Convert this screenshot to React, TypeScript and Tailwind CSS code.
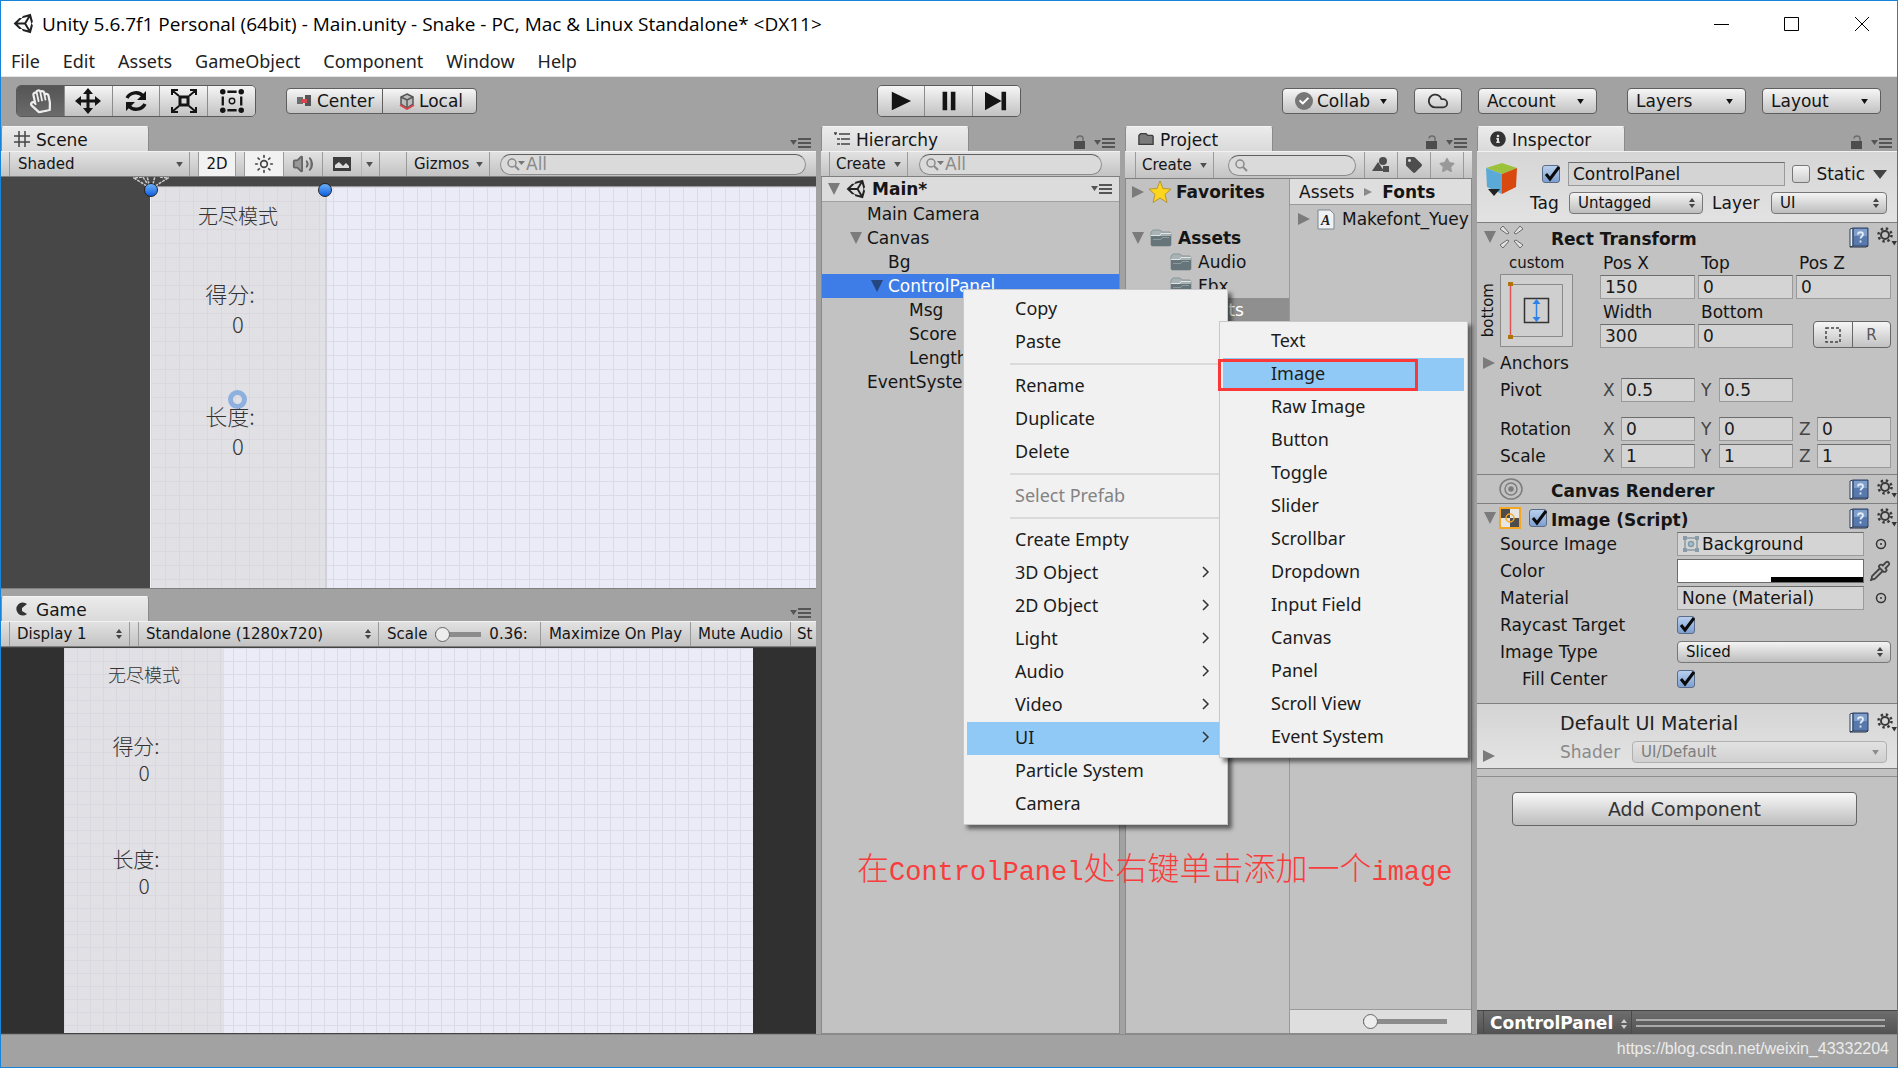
/**
 * Editor window: main toolbar, Scene / Game views on the left,
 * Hierarchy, Project and Inspector panels on the right.
 */
import type { ReactNode } from 'react'
import { clsx } from 'clsx'
import { Cloud, Pipette, Sun, Volume2 } from 'lucide-react'
import { FaCheck, FaInfoCircle, FaRegHandPaper, FaStar, FaTag, FaUnity } from 'react-icons/fa'

const MENUS = ['File', 'Edit', 'Assets', 'GameObject', 'Component', 'Window', 'Help']

interface MenuEntry {
  label: string
  submenu?: boolean
  disabled?: boolean
  active?: boolean
  divider?: boolean
}

const CONTEXT_MENU: MenuEntry[] = [
  { label: 'Copy' },
  { label: 'Paste', divider: true },
  { label: 'Rename' },
  { label: 'Duplicate' },
  { label: 'Delete', divider: true },
  { label: 'Select Prefab', disabled: true, divider: true },
  { label: 'Create Empty' },
  { label: '3D Object', submenu: true },
  { label: '2D Object', submenu: true },
  { label: 'Light', submenu: true },
  { label: 'Audio', submenu: true },
  { label: 'Video', submenu: true },
  { label: 'UI', submenu: true, active: true },
  { label: 'Particle System' },
  { label: 'Camera' },
]

const UI_MENU: MenuEntry[] = [
  { label: 'Text' },
  { label: 'Image', active: true },
  { label: 'Raw Image' },
  { label: 'Button' },
  { label: 'Toggle' },
  { label: 'Slider' },
  { label: 'Scrollbar' },
  { label: 'Dropdown' },
  { label: 'Input Field' },
  { label: 'Canvas' },
  { label: 'Panel' },
  { label: 'Scroll View' },
  { label: 'Event System' },
]

/* ---------- Small glyphs ---------- */

function Triangle({ open, small, className }: { open?: boolean; small?: boolean; className?: string }) {
  return (
    <svg viewBox="0 0 12 12" className={clsx('shrink-0', small ? 'h-2 w-2' : 'h-3 w-3', className ?? 'text-[#7b7b7b]')} fill="currentColor">
      {open ? <path d="M0 0h12L6 12z" /> : <path d="M0 0v12l12-6z" />}
    </svg>
  )
}

function Caret({ className }: { className?: string }) {
  return (
    <svg viewBox="0 0 8 6" className={clsx('h-[5px] w-[7px] shrink-0', className ?? 'text-[#505050]')} fill="currentColor">
      <path d="M0 0h8L4 6z" />
    </svg>
  )
}

function UpDown({ className }: { className?: string }) {
  return (
    <svg viewBox="0 0 6 10" className={clsx('h-2.5 w-1.5 shrink-0', className ?? 'text-[#444]')} fill="currentColor">
      <path d="M3 0l3 4H0zM3 10l3-4H0z" />
    </svg>
  )
}

function PaneMenuIcon() {
  return (
    <svg viewBox="0 0 22 10" className="h-2.5 w-[22px]" fill="#555">
      <path d="M0 2h7L3.500 7zM8 0h13v2H8zM8 4h13v2H8zM8 8h13v2H8z" />
    </svg>
  )
}

function LockIcon() {
  return (
    <svg viewBox="0 0 12 14" className="h-3.5 w-3" fill="none">
      <rect x="0" y="6" width="11" height="8" fill="#4d4d4d" />
      <path d="M3 3.500C3 0 9 0 9 3.500V6" stroke="#6d6d6d" strokeWidth="1.500" />
    </svg>
  )
}

function SearchIcon({ caret }: { caret?: boolean }) {
  return (
    <svg viewBox="0 0 18 14" className="h-3.5 w-[18px] shrink-0" fill="none">
      <circle cx="5" cy="6" r="4" stroke="#8a8a8a" strokeWidth="1.500" />
      <path d="M8 9l4 4" stroke="#8a8a8a" strokeWidth="2" />
      {caret && <path d="M11 4h7l-3.500 4z" fill="#777" />}
    </svg>
  )
}

function FolderIcon() {
  return (
    <svg viewBox="0 0 22 18" className="h-[18px] w-[22px] shrink-0">
      <path d="M1 3l2-2h7l2 2h8l1 2v11l-1 1H2l-1-1z" fill="#a9b2b4" stroke="#8d9698" />
      <path d="M1 7h20v9l-1 1H2l-1-1z" fill="#667579" />
      <path d="M1 6.500h9l1-2h10" stroke="#dfe5e6" fill="none" />
      <path d="M3 10.500h8l1-2h7" stroke="#8b999c" fill="none" />
    </svg>
  )
}

function BookIcon() {
  return (
    <svg viewBox="0 0 20 21" className="h-[21px] w-5 shrink-0">
      <path d="M1 2l3-1v18l-3 1z" fill="#e9eef4" stroke="#2f3f58" />
      <path d="M4 1h15v18H4z" fill="#5779ad" stroke="#2f4266" />
      <path d="M5 2h13v7H5z" fill="#7f9fca" />
      <path d="M1 20h16l2-1" stroke="#233149" fill="none" />
      <path d="M9 7.500c0-3 5-3 5 0 0 2-2.500 2-2.500 4M11.500 13.500v2" stroke="#e3ecf7" strokeWidth="1.800" fill="none" />
    </svg>
  )
}

function GearIcon() {
  return (
    <svg viewBox="0 0 20 20" className="h-5 w-5" fill="none" stroke="#3a3a3a">
      <circle cx="8" cy="8" r="4" strokeWidth="2" />
      <circle cx="8" cy="8" r="6.500" strokeWidth="2.500" strokeDasharray="2.400 2.705" />
      <path d="M14.500 14H20l-2.700 4.500z" fill="#333" stroke="none" />
    </svg>
  )
}

function HeaderButtons({ label }: { label: string }) {
  return (
    <span className="flex items-center gap-2">
      <button aria-label={`${label} help`}><BookIcon /></button>
      <button aria-label={`${label} settings`}><GearIcon /></button>
    </span>
  )
}

/* ---------- Controls ---------- */

function Checkbox({ id, label, checked }: { id: string; label?: string; checked?: boolean }) {
  return (
    <span className="relative inline-flex h-[18px] w-[18px] shrink-0">
      <input
        id={id}
        type="checkbox"
        aria-label={label}
        defaultChecked={checked}
        className="h-full w-full appearance-none rounded-[3px] border border-[#777] bg-linear-to-b from-[#f4f4f4] to-[#d0d0d0] checked:border-[#5c6c88] checked:from-[#b8d0ee] checked:to-[#7d9fd0]"
      />
      {checked && (
        <svg viewBox="0 0 18 18" className="pointer-events-none absolute inset-0" fill="none">
          <path d="M4 9l4 5 9-12" stroke="#0a0a0a" strokeWidth="3" />
        </svg>
      )}
    </span>
  )
}

function SelectBox({ label, value, className, disabled }: { label: string; value: string; className: string; disabled?: boolean }) {
  return (
    <span className={clsx('relative flex h-[22px] items-center', className)}>
      <select
        aria-label={label}
        disabled={disabled}
        className={clsx(
          'h-full w-full appearance-none rounded-[4px] border px-2 text-[15px] leading-5',
          disabled
            ? 'border-[#b0b0b0] bg-linear-to-b from-[#e2e2e2] to-[#d0d0d0] text-[#7d7d7d]'
            : 'border-[#777] bg-linear-to-b from-[#f4f4f4] to-[#bdbdbd] text-[#111]',
        )}
      >
        <option>{value}</option>
      </select>
      <span className="pointer-events-none absolute right-2">
        {disabled ? <Caret className="text-[#8c8c8c]" /> : <UpDown />}
      </span>
    </span>
  )
}

function Field({ label, value, axis }: { label: string; value: string; axis?: string }) {
  return (
    <label className="flex h-6 min-w-0 items-center">
      {axis && <span className="w-[21px] shrink-0 pl-[3px] text-[#444]">{axis}</span>}
      <input
        aria-label={label}
        defaultValue={value}
        className="h-full w-full min-w-0 border border-[#9a9a9a] border-t-[#6c6c6c] bg-[#d4d4d4] px-1 text-[#1a1a1a]"
      />
    </label>
  )
}

function BarButton({ label, children, className }: { label?: string; children: ReactNode; className: string }) {
  return (
    <button
      aria-label={label}
      className={clsx('flex h-[26px] items-center rounded-[4px] border border-[#5e5e5e] bg-linear-to-b from-[#f6f6f6] to-[#c2c2c2] leading-none', className)}
    >
      {children}
    </button>
  )
}

function Tab({ icon, title, lock }: { icon: ReactNode; title: string; lock?: boolean }) {
  return (
    <div className="flex h-[25px] shrink-0 items-end justify-between">
      <button className="flex h-full w-[148px] items-center gap-1.5 rounded-t-[3px] border border-b-0 border-[#8a8a8a] border-t-[#f4f4f4] bg-linear-to-b from-[#ebebeb] to-[#dadada] pt-0.5 pl-3 leading-none">
        <span className="flex w-4 justify-center pb-0.5">{icon}</span>
        {title}
      </button>
      <div className="flex items-end gap-2 pr-1 pb-0.5">
        {lock && <LockIcon />}
        <button aria-label={`${title} options`} className="flex pb-px"><PaneMenuIcon /></button>
      </div>
    </div>
  )
}

function PaneBar({ children, tall }: { children: ReactNode; tall?: boolean }) {
  return (
    <div className={clsx('flex shrink-0 items-stretch overflow-hidden border-y border-t-[#f2f2f2] border-b-[#7f7f7f] bg-linear-to-b from-[#e2e2e2] to-[#c3c3c3] text-[15px] leading-none whitespace-nowrap', tall ? 'h-7' : 'h-[26px]')}>
      {children}
    </div>
  )
}

function Search({ label, placeholder, caret, className }: { label: string; placeholder?: string; caret?: boolean; className: string }) {
  return (
    <label className={clsx('flex h-[21px] min-w-0 items-center gap-px self-center rounded-full border border-[#8c8c8c] border-t-[#5f5f5f] bg-[#dadada] px-1.5', className)}>
      <SearchIcon caret={caret} />
      <input aria-label={label} placeholder={placeholder} className="w-full min-w-0 text-[17px] leading-none placeholder:text-[#8a8a8a]" />
    </label>
  )
}

/* ---------- Title, menu and main toolbar ---------- */

function TitleBar() {
  return (
    <header className="bg-white">
      <div className="flex h-[45px] items-center pl-3 font-['Open_Sans','Noto_Sans',sans-serif] text-[19px] text-black">
        <FaUnity className="h-[23px] w-[23px] text-[#222]" />
        <h1 className="min-w-0 flex-1 truncate pl-1.5 leading-7">Unity 5.6.7f1 Personal (64bit) - Main.unity - Snake - PC, Mac &amp; Linux Standalone* &lt;DX11&gt;</h1>
        <div className="flex gap-[54px] pr-[27px]">
          <button aria-label="Minimize"><svg className="h-4 w-4" viewBox="0 0 16 16" stroke="#000"><path d="M0 8.500h15" /></svg></button>
          <button aria-label="Maximize"><svg className="h-4 w-4" viewBox="0 0 16 16" stroke="#000" fill="none"><path d="M.5 1.500h14v13H.5z" /></svg></button>
          <button aria-label="Close"><svg className="h-4 w-4" viewBox="0 0 16 16" stroke="#000"><path d="M1 1l14 14M15 1L1 15" /></svg></button>
        </div>
      </div>
      <nav className="flex h-[31px] items-center gap-[23px] border-b border-[#e4e4e4] pl-2.5 font-['Noto_Sans',sans-serif] text-[18px] text-[#222]">
        {MENUS.map(m => <button key={m}>{m}</button>)}
      </nav>
    </header>
  )
}

const TOOLS: { name: string; icon: ReactNode }[] = [
  { name: 'Hand', icon: <FaRegHandPaper className="h-6 w-6 -rotate-12 text-[#eee]" /> },
  {
    name: 'Move',
    icon: (
      <svg viewBox="0 0 26 26" className="h-[26px] w-[26px]" fill="#141414">
        <path d="M13 0l5 6h-3.500v5.500H20V8l6 5-6 5v-3.500h-5.500V20H18l-5 6-5-6h3.500v-5.500H6V18l-6-5 6-5v3.500h5.500V6H8z" />
      </svg>
    ),
  },
  {
    name: 'Rotate',
    icon: (
      <svg viewBox="0 0 24 24" className="h-6 w-6" fill="none" stroke="#141414" strokeWidth="3.500">
        <path d="M3 9c3-6 12-7 16-2M21 15c-3 6-12 7-16 2" />
        <path d="M22 2v9h-9zM2 22v-9h9z" fill="#141414" stroke="none" />
      </svg>
    ),
  },
  {
    name: 'Scale',
    icon: (
      <svg viewBox="0 0 26 24" className="h-6 w-[26px]" fill="none" stroke="#141414" strokeWidth="2">
        <rect x="9" y="8" width="8" height="8" strokeWidth="3" />
        <path d="M1 6V1h6M19 1h6v5M25 18v5h-6M7 23H1v-5M2 2l6 5M24 2l-6 5M24 22l-6-5M2 22l6-5" />
      </svg>
    ),
  },
  {
    name: 'Rect',
    icon: (
      <svg viewBox="0 0 26 26" className="h-6 w-6" fill="none" stroke="#141414" strokeWidth="2.500">
        <path d="M8 3h10M8 23h10M3 8v10M23 8v10" />
        <circle cx="13" cy="13" r="3" strokeWidth="1.500" />
        <g fill="#141414" stroke="none">
          <circle cx="3" cy="3" r="3" /><circle cx="23" cy="3" r="3" /><circle cx="3" cy="23" r="3" /><circle cx="23" cy="23" r="3" />
        </g>
      </svg>
    ),
  },
]

const PLAYBACK = [
  { name: 'Play', d: 'M2 2l21 10L2 22z' },
  { name: 'Pause', d: 'M5 2h5v20H5zM14 2h5v20h-5z' },
  { name: 'Step', d: 'M0 2l18 10L0 22zM18 2h5v20h-5z' },
]

function MainToolbar() {
  return (
    <div className="flex h-[49px] shrink-0 items-center pr-4 pb-px pl-2.5 text-[17px]">
      <div className="flex flex-1 items-center gap-[30px] pl-[5px]">
        <div className="flex h-8 w-60 overflow-hidden rounded-[5px] border border-[#5a5a5a]">
          {TOOLS.map((t, i) => (
            <button
              key={t.name}
              aria-label={t.name}
              className={clsx(
                'flex flex-1 items-center justify-center',
                i === 0 ? 'bg-linear-to-b from-[#555] to-[#6b6b6b]' : 'border-l border-[#8b8b8b] bg-linear-to-b from-[#f6f6f6] to-[#c2c2c2]',
              )}
            >
              {t.icon}
            </button>
          ))}
        </div>
        <div className="flex">
          <BarButton className="w-[97px] gap-1.5 rounded-r-none pl-2.5">
            <svg viewBox="0 0 14 12" className="h-3 w-3.5">
              <path d="M0 2h6v7H0z" fill="#6d6d6d" /><path d="M8 0h6v11H8z" fill="#555" /><path d="M5 4h5v4H5z" fill="#d8474d" />
            </svg>
            Center
          </BarButton>
          <BarButton className="-ml-px w-[95px] gap-1 rounded-l-none pl-4">
            <svg viewBox="0 0 16 17" className="h-[17px] w-4" fill="none" stroke="#555" strokeWidth="1.500">
              <path d="M8 1l6 3v7l-6 4-6-4V4z" fill="#bdbdbd" /><path d="M2 4l6 3 6-3M8 7v8" />
              <path d="M1 12l7 4 7-4" stroke="#d8474d" strokeWidth="2" />
            </svg>
            Local
          </BarButton>
        </div>
      </div>
      <div className="flex h-8 w-36 overflow-hidden rounded-[5px] border border-[#5a5a5a]">
        {PLAYBACK.map((p, i) => (
          <button key={p.name} aria-label={p.name} className={clsx('flex flex-1 items-center justify-center bg-linear-to-b from-[#f6f6f6] to-[#c2c2c2]', i > 0 && 'border-l border-[#8b8b8b]')}>
            <svg viewBox="0 0 24 24" className="h-[22px] w-[22px]" fill="#141414"><path d={p.d} /></svg>
          </button>
        ))}
      </div>
      <div className="flex flex-1 items-center justify-end gap-4">
        <BarButton className="w-[116px] gap-1 pl-3">
          <span className="flex h-[18px] w-[18px] items-center justify-center rounded-full bg-[#777]"><FaCheck className="h-2.5 w-2.5 text-white" /></span>
          Collab
          <Caret className="ml-1.5 text-[#111]" />
        </BarButton>
        <BarButton label="Cloud services" className="w-12 justify-center">
          <Cloud className="h-[22px] w-[22px] text-[#333]" strokeWidth={2} />
        </BarButton>
        <BarButton className="w-[119px] justify-between pr-3 pl-2">Account<Caret className="text-[#111]" /></BarButton>
        <BarButton className="ml-3.5 w-[119px] justify-between pr-3 pl-2">Layers<Caret className="text-[#111]" /></BarButton>
        <BarButton className="w-[119px] justify-between pr-3 pl-2">Layout<Caret className="text-[#111]" /></BarButton>
      </div>
    </div>
  )
}

/* ---------- Scene and Game views ---------- */

function ScorePair({ label, className }: { label: string; className: string }) {
  return (
    <div className={clsx('flex flex-col items-center', className)}>
      <span className="pr-4">{label}</span>
      <span>0</span>
    </div>
  )
}

function Handle({ className }: { className: string }) {
  return <span className={clsx('absolute h-3.5 w-3.5 rounded-full border border-[#222] bg-linear-to-b from-[#6cb0f8] to-[#0a5ce0]', className)} />
}

function SceneView() {
  return (
    <section className="flex flex-col">
      <Tab title="Scene" icon={<svg viewBox="0 0 16 16" className="h-4 w-4" stroke="#444" strokeWidth="1.500"><path d="M5 0v16M11 0v16M0 5h16M0 11h16" /></svg>} />
      <PaneBar>
        <button className="ml-2 flex w-[181px] items-center justify-between border-x border-[#9a9a9a] pr-1.5 pl-2">Shaded<Caret /></button>
        <button className="ml-2 w-[38px] border-x border-[#9a9a9a] bg-[#f2f2f2]">2D</button>
        <button aria-label="Scene lighting" className="ml-2 flex w-10 items-center justify-center border-x border-[#9a9a9a] bg-[#f2f2f2]"><Sun className="h-5 w-5 text-[#444]" /></button>
        <button aria-label="Scene audio" className="flex w-[39px] items-center justify-center border-r border-[#9a9a9a]"><Volume2 className="h-[22px] w-[22px] fill-[#999] text-[#666]" /></button>
        <button aria-label="Effects" className="flex w-[39px] items-center justify-center border-r border-[#b5b5b5]">
          <svg viewBox="0 0 18 14" className="h-3.5 w-[18px]"><path d="M0 0h18v14H0z" fill="#3d3d3d" /><path d="M2 11V8l4-3 4 4 3-3 3 3v2z" fill="#ddd" /></svg>
        </button>
        <button aria-label="Effects menu" className="flex w-[18px] items-center border-r border-[#9a9a9a] pl-1"><Caret /></button>
        <button className="ml-[26px] flex w-[84px] items-center justify-between border-x border-[#9a9a9a] pr-1.5 pl-[7px]">Gizmos<Caret /></button>
        <Search label="Search scene" placeholder="All" caret className="mr-2.5 ml-2.5 flex-1" />
      </PaneBar>
      <div className="flex h-[412px] overflow-hidden border-b border-[#7f7f7f] bg-[#474747] pt-[9px] pl-[149px]">
        <div className="relative flex-1 border-t border-l border-[#f4f4f4] border-t-[#9a9a9a] bg-[#ebebf7] bg-[linear-gradient(to_right,#dddae6_1px,transparent_1px),linear-gradient(to_bottom,#dddae6_1px,transparent_1px)] bg-[size:14px_14px]">
          <svg viewBox="0 0 36 12" className="absolute -top-[11px] -left-[18px] h-3 w-9" stroke="#ccc" strokeWidth="1.500" strokeDasharray="3 1">
            <path d="M17 12L1 2l9-1zM17 12L14 0M19 12L22 0M19 12L35 2l-9-1" fill="none" />
          </svg>
          <div className="h-full w-[176px] border-r-2 border-[#d0d0da] bg-[#d7d7d7]/55 pt-3.5 text-center font-['Noto_Sans_CJK_SC',sans-serif] text-[22px] leading-[30px] font-light text-[#333]">
            <p className="text-[20px]">无尽模式</p>
            <ScorePair label="得分:" className="mt-[47px]" />
            <ScorePair label="长度:" className="mt-[62px]" />
          </div>
          <Handle className="-top-1 -left-[7px]" />
          <Handle className="-top-1 left-[167px]" />
          <span className="absolute top-[203px] left-[77px] h-[19px] w-[19px] rounded-full border-5 border-[#8db0de]" />
        </div>
      </div>
    </section>
  )
}

function GameView() {
  return (
    <section className="mt-[7px] flex flex-1 flex-col">
      <Tab title="Game" icon={<svg viewBox="0 0 14 14" className="h-3.5 w-3.5"><path d="M12 2A6.500 6.500 0 1 0 12 12L7 9V6z" fill="#333" /></svg>} />
      <PaneBar>
        <button className="ml-2 flex w-[121px] shrink-0 items-center justify-between border-x border-[#9a9a9a] px-[7px]">Display 1<UpDown /></button>
        <button className="ml-2 flex w-[241px] shrink-0 items-center justify-between border-x border-[#9a9a9a] px-[7px]">Standalone (1280x720)<UpDown /></button>
        <label className="flex w-[162px] shrink-0 items-center border-r border-[#9a9a9a] pl-2">
          Scale
          <input
            type="range"
            defaultValue={0}
            className="mx-2 h-4 w-[46px] appearance-none bg-[linear-gradient(#8c8c8c,#8c8c8c)] bg-[size:100%_5px] bg-center bg-no-repeat [&::-webkit-slider-thumb]:h-[15px] [&::-webkit-slider-thumb]:w-[15px] [&::-webkit-slider-thumb]:appearance-none [&::-webkit-slider-thumb]:rounded-full [&::-webkit-slider-thumb]:border [&::-webkit-slider-thumb]:border-[#666] [&::-webkit-slider-thumb]:bg-[#ededed]"
          />
          <span>0.36:</span>
        </label>
        <button className="w-[150px] shrink-0 border-r border-[#9a9a9a]">Maximize On Play</button>
        <button className="w-[100px] shrink-0 border-r border-[#9a9a9a]">Mute Audio</button>
        <button className="w-6 shrink-0 overflow-hidden pl-1.5 text-left">St</button>
      </PaneBar>
      <div className="flex flex-1 border-t border-b border-[#444] bg-[#303030] px-[63px]">
        <div className="flex-1 bg-[#ebebf7] bg-[linear-gradient(to_right,#dddae6_1px,transparent_1px),linear-gradient(to_bottom,#dddae6_1px,transparent_1px)] bg-[size:13px_13px]">
          <div className="h-full w-40 bg-[#d7d7d7]/55 pt-[13px] text-center font-['Noto_Sans_CJK_SC',sans-serif] text-[21px] leading-[27px] font-light text-[#333]">
            <p className="text-[18px]">无尽模式</p>
            <ScorePair label="得分:" className="mt-11" />
            <ScorePair label="长度:" className="mt-[59px]" />
          </div>
        </div>
      </div>
    </section>
  )
}

/* ---------- Hierarchy ---------- */

function PopupMenu({ items, className, children }: { items: MenuEntry[]; className: string; children?: ReactNode }) {
  return (
    <div className={clsx("absolute border border-[#c9c9c9] bg-[#f1f1f1] p-[3px] font-['Noto_Sans',sans-serif] text-[18px] text-[#1c1c1c] shadow-[4px_4px_4px_rgba(0,0,0,0.5)]", className)}>
      {items.map(item => (
        <div key={item.label} className={clsx(item.divider && 'bg-[linear-gradient(#dadada,#dadada)] bg-[size:calc(100%-43px)_2px] bg-[position:right_bottom_5px] bg-no-repeat pb-[11px]')}>
          <button
            disabled={item.disabled}
            className={clsx('flex h-[33px] w-full items-center justify-between pr-3.5 pb-[3px] pl-12', item.active && 'bg-[#90c8f6]', item.disabled && 'text-[#838383]')}
          >
            {item.label}
            {item.submenu && <svg viewBox="0 0 8 12" className="h-3 w-2" fill="none" stroke="#333" strokeWidth="1.500"><path d="M1 1l5 5-5 5" /></svg>}
          </button>
        </div>
      ))}
      {children}
    </div>
  )
}

const HIERARCHY = [
  { name: 'Main Camera', pad: 'pl-[28px]' },
  { name: 'Canvas', pad: 'pl-[28px]', open: true },
  { name: 'Bg', pad: 'pl-[49px]' },
  { name: 'ControlPanel', pad: 'pl-[49px]', open: true, selected: true },
  { name: 'Msg', pad: 'pl-[70px]' },
  { name: 'Score', pad: 'pl-[70px]' },
  { name: 'Length', pad: 'pl-[70px]' },
  { name: 'EventSystem', pad: 'pl-[28px]' },
]

function Hierarchy() {
  return (
    <section className="relative z-20 flex w-[299px] shrink-0 flex-col">
      <Tab title="Hierarchy" lock icon={<svg viewBox="0 0 16 14" className="h-3.5 w-4" stroke="#444" strokeWidth="1.500"><path d="M0 1h3M5 2h11M3 7h3M7 7h9M3 12h3M7 12h9M1.500 1v2" /></svg>} />
      <PaneBar>
        <button className="ml-2 flex w-[79px] items-center justify-between border-x border-[#9a9a9a] px-1.5">Create<Caret /></button>
        <Search label="Search hierarchy" placeholder="All" caret className="mr-[18px] ml-[11px] flex-1" />
      </PaneBar>
      <div className="flex-1 border-x border-b border-[#8a8a8a] bg-[#c2c2c2]">
        <div className="flex h-[25px] items-center border-b border-[#a0a0a0] bg-[#dcdcdc] pr-1.5 pl-1.5 font-bold">
          <Triangle open />
          <FaUnity className="mr-1 ml-1.5 h-[22px] w-[22px] text-[#222]" />
          <span className="flex-1">Main*</span>
          <button aria-label="Scene options"><PaneMenuIcon /></button>
        </div>
        <ul>
          {HIERARCHY.map(node => (
            <li key={node.name} className={clsx('flex h-6 items-center leading-6', node.pad, node.selected && 'bg-[#3e7de7] text-white')}>
              <span className="w-[17px]">{node.open && <Triangle open className={node.selected ? 'text-[#24477f]' : 'text-[#7b7b7b]'} />}</span>
              {node.name}
            </li>
          ))}
        </ul>
      </div>
      <PopupMenu items={CONTEXT_MENU} className="top-[163px] left-[142px] w-[265px]">
        <PopupMenu items={UI_MENU} className="top-[31px] left-[255px] w-[249px]" />
        <span className="pointer-events-none absolute top-[69px] left-[254px] h-8 w-[200px] border-3 border-[#fa3838]" />
      </PopupMenu>
      <p className="absolute top-[722px] left-[36px] font-['Liberation_Mono','Noto_Sans_CJK_SC',monospace] text-[27px] leading-[48px] font-light whitespace-nowrap text-[#f93c3c]">
        <span className="text-[32px]">在</span>ControlPanel<span className="text-[32px]">处右键单击添加一个</span>image
      </p>
    </section>
  )
}

/* ---------- Project ---------- */

function ProjectPanel() {
  return (
    <section className="flex w-[347px] shrink-0 flex-col">
      <Tab title="Project" lock icon={<svg viewBox="0 0 18 14" className="h-3.5 w-[18px]"><path d="M1 3l2-2h6l2 2h5l1 1v9H1z" fill="#7a7a7a" stroke="#3d3d3d" strokeWidth="1.500" /></svg>} />
      <PaneBar tall>
        <button className="ml-2.5 flex w-[79px] shrink-0 items-center justify-between border-x border-[#9a9a9a] px-1.5">Create<Caret /></button>
        <Search label="Search assets" className="mr-2 ml-3.5 flex-1" />
        <button aria-label="Search by type" className="flex w-[33px] items-center justify-center border-l border-[#9a9a9a]">
          <svg viewBox="0 0 18 16" className="h-4 w-[18px]" fill="#4d4d4d"><path d="M6 5l6 9H0z" /><circle cx="11" cy="4" r="4" /><path d="M11 9h6v6h-6z" /></svg>
        </button>
        <button aria-label="Search by label" className="flex w-[33px] items-center justify-center border-l border-[#9a9a9a]"><FaTag className="h-4 w-4 text-[#4d4d4d]" /></button>
        <button aria-label="Save search" className="mr-2 flex w-[34px] items-center justify-center border-x border-[#9a9a9a]"><FaStar className="h-4 w-4 text-[#999]" /></button>
      </PaneBar>
      <div className="flex min-h-0 flex-1 border-x border-b border-[#8a8a8a] bg-[#c2c2c2]">
        <ul className="w-[164px] border-r border-[#9a9a9a] leading-6">
          <li className="mb-[22px] flex h-[25px] items-center pl-1.5 font-bold">
            <Triangle />
            <svg viewBox="0 0 24 24" className="mx-1 h-6 w-6"><path d="M12 1l3 7.500 8 .5-6 5.500 2 8-7-4.500-7 4.500 2-8L1 9l8-.5z" fill="#fbd51e" stroke="#b79538" /></svg>
            Favorites
          </li>
          <li className="flex h-6 items-center gap-1.5 pl-1.5 font-bold"><Triangle open /><FolderIcon />Assets</li>
          <li className="flex h-6 items-center gap-1.5 pl-11"><FolderIcon />Audio</li>
          <li className="flex h-6 items-center gap-1.5 pl-11"><FolderIcon />Fbx</li>
          <li className="flex h-6 items-center gap-1.5 bg-[#8f8f8f] pl-11 text-white"><FolderIcon />Fonts</li>
        </ul>
        <div className="flex min-w-0 flex-1 flex-col">
          <div className="flex h-[26px] items-center gap-2.5 border-b border-[#9a9a9a] bg-[#dedede] pl-[9px]">
            <button>Assets</button>
            <Triangle small className="text-[#8a8a8a]" />
            <button className="font-bold">Fonts</button>
          </div>
          <div className="flex h-[28px] items-center overflow-hidden pl-2 whitespace-nowrap">
            <Triangle />
            <svg viewBox="0 0 18 21" className="mr-[7px] ml-[7px] h-[21px] w-[18px] shrink-0">
              <path d="M1 1h12l4 4v15H1z" fill="#eef2f5" stroke="#7c878e" />
              <text x="4" y="16" fontSize="14" fontStyle="italic" fontWeight="bold" fontFamily="Liberation Serif" fill="#222">A</text>
            </svg>
            Makefont_Yuey
          </div>
          <div className="mt-auto flex h-6 items-center justify-end border-t border-[#9a9a9a] bg-[#dedede] pr-6">
            <input
              type="range"
              aria-label="Icon size"
              defaultValue={0}
              className="h-4 w-[84px] appearance-none bg-[linear-gradient(#8c8c8c,#8c8c8c)] bg-[size:100%_5px] bg-center bg-no-repeat [&::-webkit-slider-thumb]:h-[15px] [&::-webkit-slider-thumb]:w-[15px] [&::-webkit-slider-thumb]:appearance-none [&::-webkit-slider-thumb]:rounded-full [&::-webkit-slider-thumb]:border [&::-webkit-slider-thumb]:border-[#666] [&::-webkit-slider-thumb]:bg-[#ededed]"
            />
          </div>
        </div>
      </div>
    </section>
  )
}

/* ---------- Inspector ---------- */

function ComponentHeader({ title, icon, check, open }: { title: string; icon: ReactNode; check?: boolean; open?: boolean }) {
  return (
    <div className="flex h-7 items-center pl-[7px]">
      <span className="w-[15px]">{open && <Triangle open />}</span>
      <span className="flex w-[30px]">{icon}</span>
      <span className="flex w-[22px]">{check && <Checkbox id="image-enabled" label={title} checked />}</span>
      <h2 className="flex-1 pt-[3px] font-bold">{title}</h2>
      <HeaderButtons label={title} />
    </div>
  )
}

function Property({ label, id, indent, children }: { label: string; id?: string; indent?: boolean; children: ReactNode }) {
  return (
    <div className="flex h-6 items-center">
      <label htmlFor={id} className={clsx('w-[200px] shrink-0', indent ? 'pl-[45px]' : 'pl-[23px]')}>{label}</label>
      {children}
    </div>
  )
}

function Picker({ label }: { label: string }) {
  return (
    <button aria-label={label} className="flex w-[27px] justify-center pl-1.5">
      <svg viewBox="0 0 12 12" className="h-3 w-3" fill="none" stroke="#333"><circle cx="6" cy="6" r="4.500" strokeWidth="1.500" /><circle cx="6" cy="6" r="1" fill="#333" stroke="none" /></svg>
    </button>
  )
}

function AxisRow({ label, values, className }: { label: string; values: string[]; className?: string }) {
  return (
    <div className={clsx('flex h-6 items-center', className)}>
      <span className="w-[123px] shrink-0 pl-[23px]">{label}</span>
      <div className="grid flex-1 grid-cols-3 gap-[3px]">
        {values.map((v, i) => <Field key={i} axis={'XYZ'[i]} label={`${label} ${'XYZ'[i]}`} value={v} />)}
      </div>
    </div>
  )
}

function RectTransform() {
  return (
    <div className="border-t border-[#7f7f7f] pb-1.5">
      <ComponentHeader
        title="Rect Transform"
        open
        icon={
          <svg viewBox="0 0 25 24" className="h-6 w-[25px]" fill="#e2e2e2" stroke="#6a6a6a">
            <path d="M1 4l3-3 6 7-2 1zM24 4l-3-3-6 7 2 1zM1 20l3 3 6-7-2-1zM24 20l-3 3-6-7 2-1z" />
          </svg>
        }
      />
      <div className="flex pr-1.5">
        <div className="flex w-[123px] shrink-0 flex-col pb-px">
          <span className="flex h-[23px] items-center pl-8 text-[15px]">custom</span>
          <div className="flex items-center">
            <span className="flex w-[23px] rotate-180 items-center justify-center text-[15px] leading-none [writing-mode:vertical-rl]">bottom</span>
            <button aria-label="Anchor presets">
              <svg viewBox="0 0 73 73" className="h-[73px] w-[73px]" fill="none">
                <path d="M.5.5h72v72H.5z" fill="#cfcfcf" stroke="#8a8a8a" />
                <path d="M10.500 10.500h52v52h-52z" stroke="#8a8a8a" />
                <path d="M10.500 11v52" stroke="#e15252" strokeWidth="1.500" />
                <path d="M8 8h5v4H8zM8 61h5v4H8z" fill="#b0730b" />
                <path d="M24.500 24.500h24v24h-24z" stroke="#333" strokeWidth="1.500" />
                <path d="M36.500 26v21" stroke="#2f81ea" strokeWidth="1.500" />
                <path d="M36.500 25l4 5h-8zM36.500 48l4-5h-8z" fill="#2f81ea" />
              </svg>
            </button>
          </div>
        </div>
        <div className="grid flex-1 grid-cols-3 gap-x-[3px]">
          <span className="flex h-6 items-center pl-[3px]">Pos X</span>
          <span className="flex h-6 items-center pl-[3px]">Top</span>
          <span className="flex h-6 items-center pl-[3px]">Pos Z</span>
          <Field label="Pos X" value="150" />
          <Field label="Top" value="0" />
          <Field label="Pos Z" value="0" />
          <span className="flex h-6 items-center pl-[3px]">Width</span>
          <span className="flex h-6 items-center pl-[3px]">Bottom</span>
          <div className="row-span-2 flex items-end justify-end">
            <button aria-label="Blueprint mode" className="flex h-[27px] w-10 items-center justify-center rounded-l-[4px] border border-[#666] bg-linear-to-b from-[#f6f6f6] to-[#c2c2c2]">
              <svg viewBox="0 0 16 16" className="h-4 w-4" fill="none" stroke="#444" strokeWidth="1.500" strokeDasharray="3 2"><path d="M1 1h14v14H1z" /></svg>
            </button>
            <button className="-ml-px h-[27px] w-[39px] rounded-r-[4px] border border-[#666] bg-linear-to-b from-[#f6f6f6] to-[#c2c2c2] text-[15px] text-[#555]">R</button>
          </div>
          <Field label="Width" value="300" />
          <Field label="Bottom" value="0" />
        </div>
      </div>
      <div className="flex h-[30px] items-center pl-1.5"><Triangle /><span className="pl-[5px]">Anchors</span></div>
      <div className="pr-1.5">
        <AxisRow label="Pivot" values={['0.5', '0.5']} />
        <AxisRow label="Rotation" values={['0', '0', '0']} className="mt-[15px]" />
        <AxisRow label="Scale" values={['1', '1', '1']} className="mt-[3px]" />
      </div>
    </div>
  )
}

function Inspector() {
  return (
    <section className="flex w-[420px] shrink-0 flex-col">
      <Tab title="Inspector" lock icon={<FaInfoCircle className="h-4 w-4 text-[#333]" />} />
      <div className="flex flex-1 flex-col bg-[#c2c2c2]">
        <div className="flex h-[71px] shrink-0 border-t border-[#f2f2f2] bg-linear-to-b from-[#d6d6d6] to-[#e2e2e2] pt-2.5 pr-2.5">
          <div className="w-[53px] shrink-0 pl-2">
            <svg viewBox="0 0 33 34" className="h-[34px] w-[33px]">
              <path d="M1 6L17 1l15 5-15 6z" fill="#9cc23c" />
              <path d="M1 6l16 6v20L2 25z" fill="#5aa9d6" />
              <path d="M32 6l-15 6v20l14-7z" fill="#d9480f" />
              <path d="M3 27h12l-6 7z" fill="#222" />
            </svg>
          </div>
          <div className="min-w-0 flex-1">
            <div className="flex h-6 items-center">
              <span className="flex w-[38px] shrink-0 justify-center pl-1"><Checkbox id="active" label="Active" checked /></span>
              <input aria-label="Name" defaultValue="ControlPanel" className="h-6 w-0 min-w-0 flex-1 border border-[#9a9a9a] border-t-[#6c6c6c] bg-[#d4d4d4] px-1" />
              <span className="ml-[7px] flex items-center gap-1.5"><Checkbox id="static" /><label htmlFor="static">Static</label></span>
              <svg viewBox="0 0 14 9" className="ml-2 h-[9px] w-3.5 shrink-0" fill="#444"><path d="M0 0h14L7 9z" /></svg>
            </div>
            <div className="mt-1.5 flex h-[22px] items-center">
              <span className="w-[39px] shrink-0">Tag</span>
              <SelectBox label="Tag" value="Untagged" className="w-[134px] shrink-0" />
              <span className="w-[68px] shrink-0 pl-[9px]">Layer</span>
              <SelectBox label="Layer" value="UI" className="min-w-0 flex-1" />
            </div>
          </div>
        </div>

        <RectTransform />

        <div className="border-t border-[#7f7f7f]">
          <ComponentHeader
            title="Canvas Renderer"
            icon={
              <svg viewBox="0 0 24 22" className="h-[22px] w-6" fill="none" stroke="#7d7d7d" strokeWidth="1.500">
                <ellipse cx="12" cy="11" rx="11" ry="10" /><circle cx="12" cy="11" r="6" /><circle cx="12" cy="11" r="2" fill="#7d7d7d" />
              </svg>
            }
          />
        </div>

        <div className="border-t border-[#7f7f7f] pb-3">
          <ComponentHeader
            title="Image (Script)"
            check
            open
            icon={
              <svg viewBox="0 0 22 22" className="h-[22px] w-[22px]">
                <path d="M1 1h20v20H1z" fill="#e6e6e6" /><path d="M1 1h10v10H1zM11 11h10v10H11z" fill="#4d4d4d" />
                <path d="M1 1h20v20H1z" fill="none" stroke="#f5a623" strokeWidth="2" /><circle cx="11" cy="11" r="4" fill="none" stroke="#f5a623" strokeWidth="1.500" />
              </svg>
            }
          />
          <div className="flex flex-col gap-[3px] pr-1.5">
            <Property label="Source Image">
              <button className="flex h-6 flex-1 items-center gap-0.5 border border-[#9a9a9a] border-t-[#6c6c6c] bg-[#d4d4d4] pl-1 leading-none">
                <svg viewBox="0 0 18 18" className="h-[18px] w-[18px]" fill="none" stroke="#8a9ba5" strokeWidth="1.500">
                  <path d="M3 3h12v12H3z" /><circle cx="9" cy="9" r="2.500" fill="#9ec3d6" />
                  <path d="M1 1h4v4H1zM13 1h4v4h-4zM1 13h4v4H1zM13 13h4v4h-4z" fill="#8a9ba5" stroke="none" />
                </svg>
                Background
              </button>
              <Picker label="Pick source image" />
            </Property>
            <Property label="Color">
              <button aria-label="Color" className="flex h-6 flex-1 items-end justify-end border border-[#6c6c6c] bg-white">
                <span className="h-[5px] w-1/2 bg-black" />
              </button>
              <button aria-label="Pick color" className="flex w-[27px] justify-center pl-1"><Pipette className="h-[22px] w-[22px] fill-[#bbb] text-[#444]" strokeWidth={2} /></button>
            </Property>
            <Property label="Material">
              <button className="flex h-6 flex-1 items-center border border-[#9a9a9a] border-t-[#6c6c6c] bg-[#d4d4d4] pl-1 leading-none">None (Material)</button>
              <Picker label="Pick material" />
            </Property>
            <Property label="Raycast Target" id="raycast"><Checkbox id="raycast" checked /></Property>
            <Property label="Image Type"><SelectBox label="Image Type" value="Sliced" className="flex-1" /></Property>
            <Property label="Fill Center" id="fill-center" indent><Checkbox id="fill-center" checked /></Property>
          </div>
        </div>

        <div className="relative flex h-[66px] shrink-0 flex-col border-y border-[#7f7f7f] bg-linear-to-b from-[#d4d4d4] to-[#e4e4e4] pl-[83px]">
          <Triangle className="absolute bottom-1.5 left-1.5 text-[#7b7b7b]" />
          <div className="flex h-[37px] items-center justify-between text-[19px] text-[#222]">Default UI Material<HeaderButtons label="Material" /></div>
          <div className="flex h-[22px] items-center pr-2.5 text-[#8a8a8a]">
            <span className="w-[72px] shrink-0">Shader</span>
            <SelectBox label="Shader" value="UI/Default" disabled className="flex-1" />
          </div>
        </div>
        <div className="mt-[7px] border-t border-[#8f8f8f] pt-[15px] pr-10 pb-4 pl-[35px]">
          <button className="h-[34px] w-full rounded-[4px] border border-[#666] bg-linear-to-b from-[#f8f8f8] to-[#bdbdbd] text-[19px] leading-none text-[#333]">Add Component</button>
        </div>

        <div className="mt-auto flex h-6 items-center border-t border-[#444] bg-linear-to-b from-[#6e6e6e] to-[#525252] pr-3 pl-1.5">
          <button className="flex h-full items-center gap-2 border-x border-[#4a4a4a] pt-0.5 pr-1 pl-1.5 leading-none font-bold text-white">ControlPanel<UpDown className="text-[#ccc]" /></button>
          <span className="ml-1 h-2 flex-1 border-y-2 border-[#aaa]" />
        </div>
      </div>
    </section>
  )
}

export default function App() {
  return (
    <div className="flex min-h-screen flex-col overflow-hidden border border-[#1883d7] bg-[#a2a2a2] font-['DejaVu_Sans','Noto_Sans_CJK_SC',sans-serif] text-[17px] leading-6 text-[#151515]">
      <TitleBar />
      <MainToolbar />
      <main className="flex flex-1 gap-[5px]">
        <div className="flex min-w-0 flex-1 flex-col">
          <SceneView />
          <GameView />
        </div>
        <Hierarchy />
        <ProjectPanel />
        <Inspector />
      </main>
      <footer className="flex h-[33px] items-center justify-end border-t border-[#8a8a8a] pr-2 pb-1 font-['Liberation_Sans',sans-serif] text-[16px] text-[#ececec]">
        https://blog.csdn.net/weixin_43332204
      </footer>
    </div>
  )
}
